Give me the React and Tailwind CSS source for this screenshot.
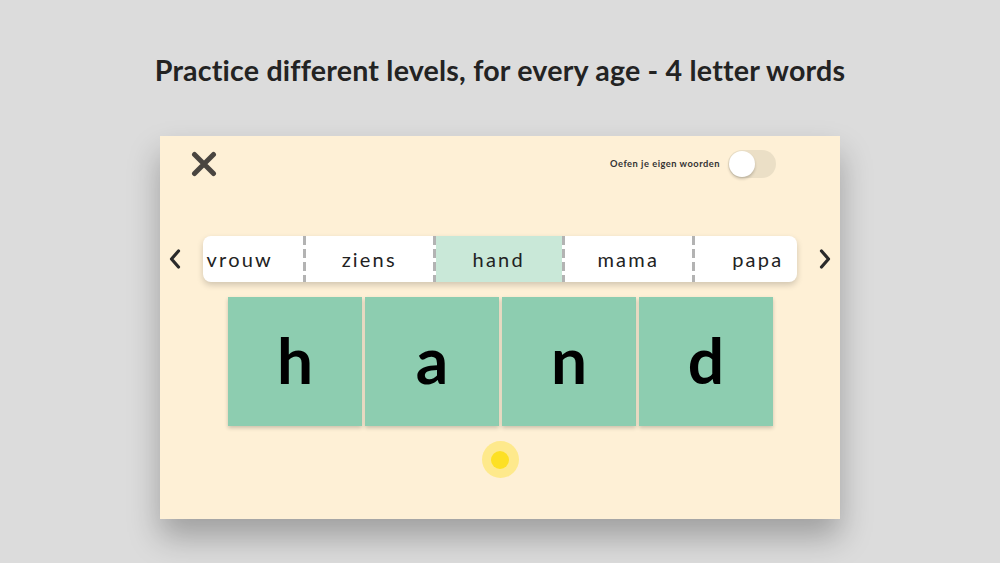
import React from "react";

const words = ["vrouw", "ziens", "hand", "mama", "papa"];

function Sep() {
  return (
    <div className="w-[3px] self-stretch shrink-0 bg-[repeating-linear-gradient(to_bottom,#b3b3b3_0px,#b3b3b3_9px,transparent_9px,transparent_13px)]" />
  );
}

export default function App() {
  return (
    <div className="w-full h-[563px] bg-[#dcdcdc] flex flex-col items-center overflow-hidden" style={{ fontFamily: "Lato, 'Open Sans', sans-serif" }}>
      <h1 className="mt-[52px] text-[28.6px] leading-[36px] font-bold text-[#232323] tracking-[0.2px]">
        Practice different levels, for every age - 4 letter words
      </h1>
      <div className="mt-[48px] w-[680px] h-[383px] bg-[#fef0d6] shadow-[0_18px_30px_rgba(0,0,0,0.28)] flex flex-col">
        <div className="flex items-center justify-between pl-[31px] pr-[64px] h-[55px]">
          <svg width="26" height="26" viewBox="0 0 26 26">
            <path d="M3.5 3.5 L22.5 22.5 M22.5 3.5 L3.5 22.5" stroke="#4a4540" strokeWidth="5" strokeLinecap="round" />
          </svg>
          <div className="flex items-center gap-[8px]">
            <span className="text-[9.3px] font-bold text-[#333] tracking-[0.5px]">Oefen je eigen woorden</span>
            <div className="w-[48px] h-[28px] rounded-full bg-[#ebdfc6] flex items-center pl-[1px]">
              <div className="w-[26px] h-[26px] rounded-full bg-white shadow-[0_2px_3px_rgba(0,0,0,0.2)]" />
            </div>
          </div>
        </div>
        <div className="mt-[45px] flex items-center justify-between pl-[8px] pr-[8px]">
          <svg width="14" height="22" viewBox="0 0 14 22">
            <path d="M10.5 3 L3.5 11 L10.5 19" fill="none" stroke="#2a2a2a" strokeWidth="3.2" strokeLinecap="round" strokeLinejoin="round" />
          </svg>
          <div className="w-[594px] h-[46px] bg-white rounded-[8px] overflow-hidden shadow-[0_3px_6px_rgba(0,0,0,0.18)] flex">
            <div className="flex shrink-0 ml-[-26.5px]">
              {words.map((w, i) => (
                <React.Fragment key={w}>
                  {i > 0 && <Sep />}
                  <div className={"w-[126.5px] h-[46px] shrink-0 flex items-center justify-center text-[20px] text-[#222] tracking-[2.2px] " + (w === "hand" ? "bg-[#c9e8d8]" : "")}>
                    {w}
                  </div>
                </React.Fragment>
              ))}
            </div>
          </div>
          <svg width="14" height="22" viewBox="0 0 14 22">
            <path d="M3.5 3 L10.5 11 L3.5 19" fill="none" stroke="#2a2a2a" strokeWidth="3.2" strokeLinecap="round" strokeLinejoin="round" />
          </svg>
        </div>
        <div className="mt-[15px] flex justify-center gap-[3px] pl-[1px]">
          {["h", "a", "n", "d"].map((l) => (
            <div key={l} className="w-[134px] h-[129px] bg-[#8dcdb0] shadow-[0_2px_4px_rgba(0,0,0,0.2)] flex items-center justify-center text-[64px] font-bold text-black leading-none pb-[4px]">
              {l}
            </div>
          ))}
        </div>
        <div className="mt-[15px] flex justify-center">
          <div className="w-[37px] h-[37px] rounded-full bg-[#fee98c] flex items-center justify-center">
            <div className="w-[18px] h-[18px] rounded-full bg-[#fde024]" />
          </div>
        </div>
      </div>
    </div>
  );
}
